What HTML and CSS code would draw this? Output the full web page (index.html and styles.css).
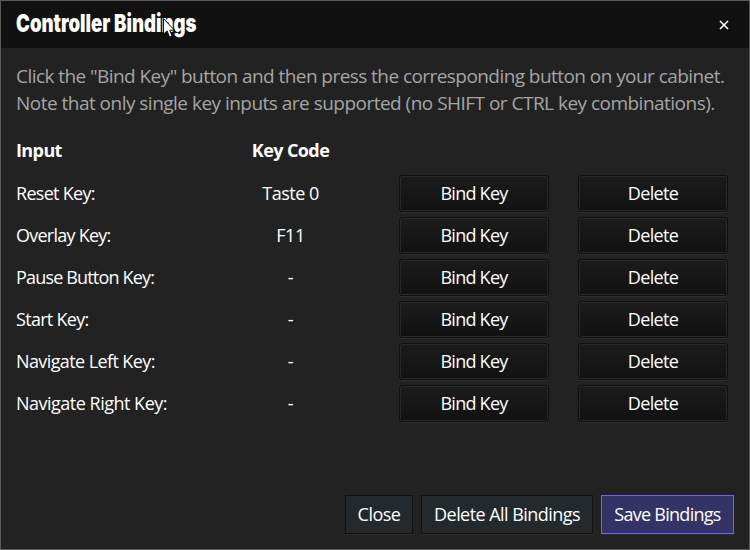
FILE: index.html
```html
<!DOCTYPE html>
<html lang="en">
<head>
<meta charset="utf-8">
<title>Controller Bindings</title>
<link rel="stylesheet" href="styles.css">
</head>
<body>
<main class="dialog">
  <header class="titlebar">
    <h1 class="title"><svg class="title-text" width="190" height="34"><text x="0" y="24" textLength="180.5" lengthAdjust="spacingAndGlyphs">Controller Bindings</text></svg></h1>
    <svg class="close" width="10" height="10" viewBox="0 0 10 10"><path d="M1 1L9 9M9 1L1 9"/></svg>
  </header>
  <svg class="cursor" width="13" height="20" viewBox="0 0 13 20"><path d="M1.5 .5V16L5.2 13L7.5 19L10 18L7.8 12.2H12.4Z"/></svg>
  <section class="content">
    <p class="intro"><span class="l1">Click the "Bind Key" button and then press the corresponding button on your cabinet.</span><br><span class="l2">Note that only single key inputs are supported (no SHIFT or CTRL key combinations).</span></p>
    <div class="grid">
      <b class="head">Input</b><b class="head code">Key Code</b><i></i><i></i>
      <span class="r1">Reset Key:</span><span class="code">Taste 0</span><button class="bind">Bind Key</button><button class="delete">Delete</button>
      <span class="r2">Overlay Key:</span><span class="code">F11</span><button class="bind">Bind Key</button><button class="delete">Delete</button>
      <span class="r3">Pause Button Key:</span><span class="code">-</span><button class="bind">Bind Key</button><button class="delete">Delete</button>
      <span class="r4">Start Key:</span><span class="code">-</span><button class="bind">Bind Key</button><button class="delete">Delete</button>
      <span class="r5">Navigate Left Key:</span><span class="code">-</span><button class="bind">Bind Key</button><button class="delete">Delete</button>
      <span class="r6">Navigate Right Key:</span><span class="code">-</span><button class="bind">Bind Key</button><button class="delete">Delete</button>
    </div>
  </section>
  <footer class="actions">
    <button class="flat close-btn">Close</button><button class="flat all">Delete All Bindings</button><button class="flat primary">Save Bindings</button>
  </footer>
</main>
</body>
</html>
```
FILE: styles.css
```css
* { box-sizing: border-box; }
body { margin: 0; background: #222; }
.dialog {
  width: 750px; height: 550px; border: 1px solid #5a5a5a; background: #222;
  display: flex; flex-direction: column; position: relative;
  font: 18px/26px "Open Sans", "Noto Sans", sans-serif; letter-spacing: -.5px; color: #fff;
}
.titlebar { height: 47px; flex: none; background: #111; display: flex; align-items: center; justify-content: space-between; padding: 0 20px 0 15px; }
.title { margin: 0; height: 34px; }
.title-text { display: block; overflow: visible; letter-spacing: 0; font: 900 24.5px Inter, sans-serif; fill: #fff; }
.close { fill: none; stroke: #fff; stroke-width: 1.6; }
.cursor { position: absolute; left: 161px; top: 17px; fill: #fff; stroke: #111; stroke-width: 1; }
.content { flex: 1; padding: 15px 15px 0; }
.intro { margin: 0; font-size: 19px; line-height: 27px; color: #a5a5a5; white-space: nowrap; }
.l1 { letter-spacing: -.56px; }
.l2 { letter-spacing: -.52px; }
.grid { display: grid; grid-template-columns: 200px 149px 150px 150px; grid-template-rows: 42px repeat(6, 42px); align-items: center; margin-top: 13px; white-space: nowrap; }
.head { padding-bottom: 2px; letter-spacing: -.6px; }
.code { text-align: center; }
.bind { margin-left: 34px; letter-spacing: -.75px; }
.delete { margin-left: 63px; letter-spacing: -.65px; }
.r1, .r4 { letter-spacing: -.7px; }
.r2 { letter-spacing: -.75px; }
.r3 { letter-spacing: -.83px; }
.r5 { letter-spacing: -.6px; }
button {
  font: inherit; color: #fff; height: 37px; width: 150px; margin-top: 1px; padding: 0 0 1px;
  border: 1px solid #101010; border-radius: 3px; background: linear-gradient(#1c1c1c, #111);
  box-shadow: inset 0 0 0 1px #282828, 0 1px 0 #2d2d2d;
}
.actions { display: flex; justify-content: flex-end; gap: 8px; padding: 0 15px 15px; }
.flat { height: 39px; margin: 0; border-radius: 0; background: #24292e; border-color: #111; box-shadow: 0 1px 0 #2d2d2d; }
.close-btn { width: 68px; letter-spacing: -.5px; }
.all { width: 172px; letter-spacing: -.55px; }
.primary { width: 133px; background: #333366; border-color: #6666ff; letter-spacing: -.72px; }
```
